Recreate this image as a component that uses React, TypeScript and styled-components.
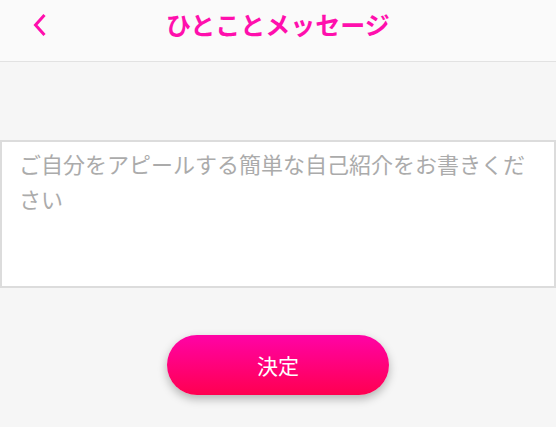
import styled, { createGlobalStyle } from 'styled-components';

const GlobalStyle = createGlobalStyle`
  html, body {
    margin: 0;
    padding: 0;
    background: #f6f6f6;
    font-family: "Noto Sans CJK JP", "Noto Sans", sans-serif;
  }
`;

const Page = styled.div`
  width: 556px;
  min-height: 427px;
  background: #f6f6f6;
  display: flex;
  flex-direction: column;
`;

const Header = styled.header`
  height: 61px;
  background: #fafafa;
  border-bottom: 1px solid #e2e2e2;
  display: grid;
  grid-template-columns: 80px 1fr 80px;
  align-items: start;
`;

const BackButton = styled.button`
  height: 50px;
  width: 80px;
  border: none;
  background: transparent;
  padding: 0;
  display: flex;
  align-items: center;
  justify-content: center;
  cursor: pointer;
`;

const Title = styled.h1`
  margin: 0;
  line-height: 48px;
  font-size: 25px;
  font-weight: 700;
  color: #ff0fad;
  text-align: center;
`;

const Body = styled.main`
  padding-top: 78px;
  display: flex;
  flex-direction: column;
  align-items: center;
`;

const MessageInput = styled.textarea`
  box-sizing: border-box;
  width: 556px;
  height: 148px;
  margin: 0;
  border: 2px solid #dcdcdc;
  background: #fff;
  padding: 4px 17px;
  font-family: "Noto Sans CJK JP", "Noto Sans", sans-serif;
  font-size: 22px;
  line-height: 35px;
  color: #333;
  resize: none;
  outline: none;

  &::placeholder {
    color: #ababab;
  }
`;

const SubmitButton = styled.button`
  margin-top: 47px;
  width: 222px;
  height: 60px;
  border: none;
  border-radius: 30px;
  background: linear-gradient(180deg, #ff03a6 0%, #ff0050 100%);
  box-shadow: 0 4px 10px rgba(0, 0, 0, 0.28);
  color: #fff;
  font-family: "Noto Sans CJK JP", "Noto Sans", sans-serif;
  font-size: 21px;
  cursor: pointer;
`;

export default function App() {
  return (
    <Page>
      <GlobalStyle />
      <Header>
        <BackButton aria-label="戻る">
          <svg width="14" height="24" viewBox="0 0 14 24">
            <path d="M11.5 2 L2.5 12 L11.5 22" fill="none" stroke="#ff0fad" strokeWidth="3" />
          </svg>
        </BackButton>
        <Title>ひとことメッセージ</Title>
        <div />
      </Header>
      <Body>
        <MessageInput placeholder="ご自分をアピールする簡単な自己紹介をお書きください" />
        <SubmitButton>決定</SubmitButton>
      </Body>
    </Page>
  );
}
